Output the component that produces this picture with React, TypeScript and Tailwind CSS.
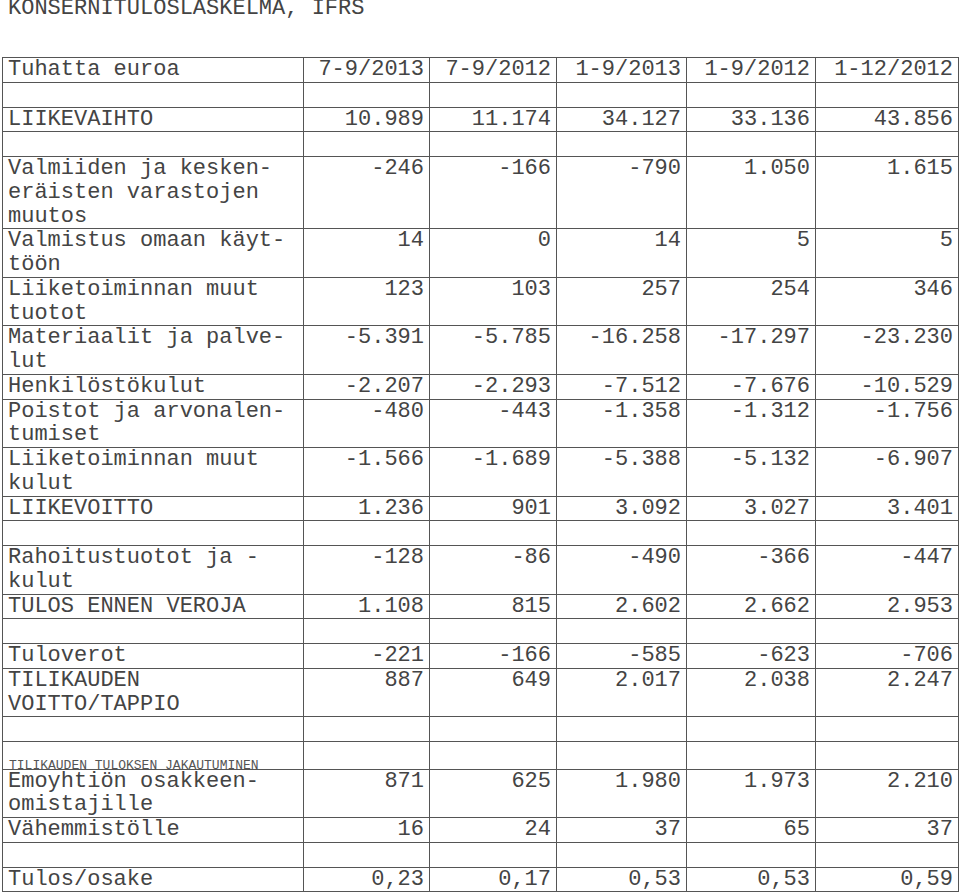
import React from "react";

type Row =
  | { kind: "data"; label: string[]; v: string[] }
  | { kind: "empty" }
  | { kind: "small"; text: string };

const E: Row = { kind: "empty" };

const rows: Row[] = [
  { kind: "data", label: ["Tuhatta euroa"], v: ["7-9/2013", "7-9/2012", "1-9/2013", "1-9/2012", "1-12/2012"] },
  E,
  { kind: "data", label: ["LIIKEVAIHTO"], v: ["10.989", "11.174", "34.127", "33.136", "43.856"] },
  E,
  { kind: "data", label: ["Valmiiden ja kesken-", "eräisten varastojen", "muutos"], v: ["-246", "-166", "-790", "1.050", "1.615"] },
  { kind: "data", label: ["Valmistus omaan käyt-", "töön"], v: ["14", "0", "14", "5", "5"] },
  { kind: "data", label: ["Liiketoiminnan muut", "tuotot"], v: ["123", "103", "257", "254", "346"] },
  { kind: "data", label: ["Materiaalit ja palve-", "lut"], v: ["-5.391", "-5.785", "-16.258", "-17.297", "-23.230"] },
  { kind: "data", label: ["Henkilöstökulut"], v: ["-2.207", "-2.293", "-7.512", "-7.676", "-10.529"] },
  { kind: "data", label: ["Poistot ja arvonalen-", "tumiset"], v: ["-480", "-443", "-1.358", "-1.312", "-1.756"] },
  { kind: "data", label: ["Liiketoiminnan muut", "kulut"], v: ["-1.566", "-1.689", "-5.388", "-5.132", "-6.907"] },
  { kind: "data", label: ["LIIKEVOITTO"], v: ["1.236", "901", "3.092", "3.027", "3.401"] },
  E,
  { kind: "data", label: ["Rahoitustuotot ja -", "kulut"], v: ["-128", "-86", "-490", "-366", "-447"] },
  { kind: "data", label: ["TULOS ENNEN VEROJA"], v: ["1.108", "815", "2.602", "2.662", "2.953"] },
  E,
  { kind: "data", label: ["Tuloverot"], v: ["-221", "-166", "-585", "-623", "-706"] },
  { kind: "data", label: ["TILIKAUDEN", "VOITTO/TAPPIO"], v: ["887", "649", "2.017", "2.038", "2.247"] },
  E,
  { kind: "small", text: "TILIKAUDEN TULOKSEN JAKAUTUMINEN" },
  { kind: "data", label: ["Emoyhtiön osakkeen-", "omistajille"], v: ["871", "625", "1.980", "1.973", "2.210"] },
  { kind: "data", label: ["Vähemmistölle"], v: ["16", "24", "37", "65", "37"] },
  E,
  { kind: "data", label: ["Tulos/osake"], v: ["0,23", "0,17", "0,53", "0,53", "0,59"] },
];

const cell = "border border-[#555] align-top px-[5px] py-0";

export default function App() {
  return (
    <div className="bg-white w-[960px] h-[896px] overflow-hidden font-['Liberation_Mono','DejaVu_Sans_Mono',monospace] text-[22px] leading-[23.75px] text-[#444]">
      <div className="pl-[8px] -mt-[3px] h-[60px] whitespace-pre">KONSERNITULOSLASKELMA, IFRS</div>
      <table className="table-fixed border-collapse ml-[2px] w-[956px]">
        <colgroup>
          <col className="w-[301px]" />
          <col className="w-[126px]" />
          <col className="w-[127px]" />
          <col className="w-[130px]" />
          <col className="w-[129px]" />
          <col className="w-[143px]" />
        </colgroup>
        <tbody>
          {rows.map((r, i) => {
            if (r.kind === "empty") {
              return (
                <tr key={i}>
                  <td className={cell}>{"\u00a0"}</td>
                  <td className={cell}></td>
                  <td className={cell}></td>
                  <td className={cell}></td>
                  <td className={cell}></td>
                  <td className={cell}></td>
                </tr>
              );
            }
            if (r.kind === "small") {
              return (
                <tr key={i}>
                  <td className="border border-[#555] align-top p-0">
                    <div className="h-[26.7px] flex items-end overflow-hidden px-[6px]">
                      <span className="text-[13px] leading-[13px] -mb-[3px] text-[#555] whitespace-pre">{r.text}</span>
                    </div>
                  </td>
                  <td className={cell}></td>
                  <td className={cell}></td>
                  <td className={cell}></td>
                  <td className={cell}></td>
                  <td className={cell}></td>
                </tr>
              );
            }
            return (
              <tr key={i}>
                <td className={cell + " whitespace-pre"}>
                  {r.label.map((l, j) => (
                    <div key={j}>{l}</div>
                  ))}
                </td>
                {r.v.map((v, j) => (
                  <td key={j} className={cell + " text-right whitespace-pre"}>
                    {v}
                  </td>
                ))}
              </tr>
            );
          })}
        </tbody>
      </table>
    </div>
  );
}
